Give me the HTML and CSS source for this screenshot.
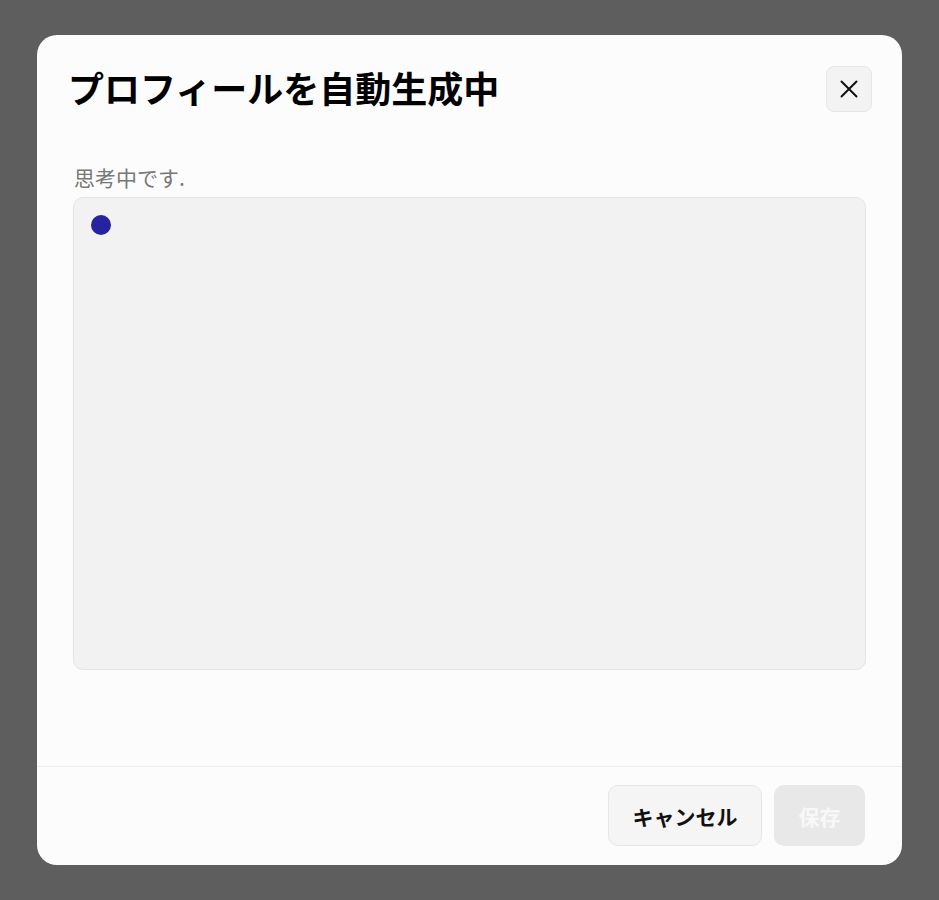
FILE: index.html
```html
<!DOCTYPE html>
<html lang="ja">
<head>
<meta charset="utf-8">
<link rel="stylesheet" href="styles.css">
</head>
<body>
<div class="overlay">
  <div class="modal">
    <div class="header">
      <h1 class="title">プロフィールを自動生成中</h1>
      <button class="close" aria-label="閉じる">
        <svg width="20" height="20" viewBox="0 0 20 20"><path d="M2.5 2.5 L17.5 17.5 M17.5 2.5 L2.5 17.5" stroke="#111" stroke-width="2" stroke-linecap="round" fill="none"/></svg>
      </button>
    </div>
    <div class="body">
      <div class="label">思考中です.</div>
      <div class="area"><span class="dot"></span></div>
    </div>
    <div class="footer">
      <button class="btn cancel">キャンセル</button>
      <button class="btn save" disabled>保存</button>
    </div>
  </div>
</div>
</body>
</html>
```
FILE: styles.css
```css
html, body {
  margin: 0;
  padding: 0;
  height: 100%;
}
body {
  background: #5e5e5e;
  font-family: "Noto Sans CJK JP", "Noto Sans", sans-serif;
}
.overlay {
  padding: 35px 37px;
  height: 900px;
  box-sizing: border-box;
}
.modal {
  background: #fcfcfc;
  border-radius: 20px;
  height: 830px;
  display: flex;
  flex-direction: column;
  box-sizing: border-box;
}
.header {
  display: flex;
  align-items: center;
  justify-content: space-between;
  padding: 31px 30px 0 31px;
  height: 46px;
}
.title {
  margin: 0 0 5px;
  font-size: 36px;
  font-weight: 700;
  color: #000;
  line-height: 46px;
}
.close {
  width: 46px;
  height: 46px;
  border-radius: 8px;
  background: #f3f3f3;
  border: 1px solid #e6e6e6;
  display: flex;
  align-items: center;
  justify-content: center;
  padding: 0;
}
.body {
  padding: 0 36px;
  flex: 1;
}
.label {
  margin-top: 53px;
  font-size: 21px;
  color: #777;
  line-height: 24px;
  padding-left: 1px;
}
.area {
  margin-top: 8px;
  height: 473px;
  background: #f2f2f2;
  border: 1px solid #e4e4e4;
  border-radius: 10px;
  box-sizing: border-box;
  padding: 17px 17px;
}
.dot {
  display: block;
  width: 20px;
  height: 20px;
  border-radius: 50%;
  background: #25239f;
}
.footer {
  border-top: 1px solid #ececec;
  display: flex;
  justify-content: flex-end;
  gap: 12px;
  padding: 18px 37px 19px;
}
.btn {
  height: 61px;
  border-radius: 10px;
  font-family: "Noto Sans CJK JP", "Noto Sans", sans-serif;
  font-size: 21px;
  font-weight: 700;
  box-sizing: border-box;
}
.cancel {
  width: 154px;
  background: #f5f5f5;
  border: 1px solid #e6e6e6;
  color: #111;
}
.save {
  width: 91px;
  background: #e8e8e8;
  border: none;
  color: #f8f8f8;
}
```
